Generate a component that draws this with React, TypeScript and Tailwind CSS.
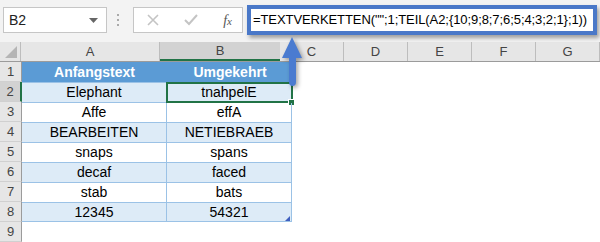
import React from 'react';

const rows = [
  ['Elephant', 'tnahpelE'],
  ['Affe', 'effA'],
  ['BEARBEITEN', 'NETIEBRAEB'],
  ['snaps', 'spans'],
  ['decaf', 'faced'],
  ['stab', 'bats'],
  ['12345', '54321'],
];

const font = { fontFamily: '"Liberation Sans", Arial, sans-serif' };

function RowHead({ n, active }: { n: number; active?: boolean }) {
  return (
    <div
      className={`w-[22px] h-[20px] flex items-center justify-center text-[13px] text-[#444] border-b border-[#d0d0d0] ${
        active ? 'bg-[#d2d2d2] border-r-2 border-r-[#217346]' : 'bg-[#e6e6e6] border-r border-r-[#9b9b9b]'
      }`}
    >
      {n}
    </div>
  );
}

export default function App() {
  return (
    <div className="relative w-[600px] h-[242px] overflow-hidden bg-white" style={font}>
      {/* formula toolbar */}
      <div className="h-[42px] bg-[#f3f3f3] flex items-start pt-[5px]">
        <div className="ml-[3px] mt-[2px] w-[104px] h-[26px] bg-white border border-[#c6c6c6] flex items-center justify-between pl-[5px] pr-[8px]">
          <span className="text-[14px] text-[#222]">B2</span>
          <svg width="9" height="5" viewBox="0 0 9 5">
            <path d="M0 0 L9 0 L4.5 5 Z" fill="#666" />
          </svg>
        </div>
        <div className="ml-[10px] mt-[9px] flex flex-col gap-[3px]">
          <span className="w-[2px] h-[2px] bg-[#aaa]" />
          <span className="w-[2px] h-[2px] bg-[#aaa]" />
          <span className="w-[2px] h-[2px] bg-[#aaa]" />
        </div>
        <div className="ml-[14px] mt-[2px] w-[110px] h-[26px] bg-white border border-[#c6c6c6] flex items-center justify-between pl-[13px] pr-[10px]">
          <svg width="12" height="12" viewBox="0 0 12 12">
            <path d="M1 1 L11 11 M11 1 L1 11" stroke="#c4c4c4" strokeWidth="1.6" />
          </svg>
          <svg width="14" height="12" viewBox="0 0 14 12">
            <path d="M1 6 L5 10 L13 1" stroke="#c4c4c4" strokeWidth="2" fill="none" />
          </svg>
          <span className="text-[14px] italic text-[#555]" style={{ fontFamily: '"Liberation Serif", serif' }}>
            f<span className="text-[11px]">x</span>
          </span>
        </div>
        <div className="ml-[4px] w-[350px] h-[30px] bg-white border-4 border-[#4a78c8] shadow-[2px_3px_4px_rgba(0,0,0,0.35)] flex items-center pl-[2px] overflow-hidden">
          <span className="text-[13px] text-black whitespace-nowrap tracking-[-0.08px]">
            =TEXTVERKETTEN("";1;TEIL(A2;{'{'}10;9;8;7;6;5;4;3;2;1{'}'};1))
          </span>
        </div>
      </div>

      {/* column headers */}
      <div className="flex h-[20px] bg-[#e6e6e6] border-b border-[#9b9b9b] text-[13px] text-[#444]">
        <div className="w-[22px] relative border-r border-[#bdbdbd]">
          <svg className="absolute right-[3px] bottom-[3px]" width="12" height="12" viewBox="0 0 12 12">
            <path d="M12 0 L12 12 L0 12 Z" fill="#b5b5b5" />
          </svg>
        </div>
        <div className="w-[145px] flex items-center justify-center border-r border-[#bdbdbd]">A</div>
        <div className="w-[125px] flex items-center justify-center bg-[#d2d2d2] border-b-2 border-[#217346]">B</div>
        {['C', 'D', 'E', 'F', 'G'].map((c) => (
          <div key={c} className="w-[64px] shrink-0 flex items-center justify-center border-r border-[#bdbdbd]">
            {c}
          </div>
        ))}
      </div>

      {/* grid */}
      <div className="flex text-[14px] text-black">
        <div className="flex flex-col">
          {Array.from({ length: 9 }, (_, i) => (
            <RowHead key={i} n={i + 1} active={i === 1} />
          ))}
        </div>
        <div className="flex flex-col w-[270px]">
          <div className="flex h-[20px] bg-[#5b9bd5] text-white font-bold">
            <div className="w-[145px] flex items-center justify-center">Anfangstext</div>
            <div className="w-[125px] flex items-center justify-center border-l border-[#5b9bd5]">Umgekehrt</div>
          </div>
          {rows.map(([a, b], i) => (
            <div
              key={a}
              className={`flex h-[20px] border-t border-[#9bc2e6] ${i % 2 === 0 ? 'bg-[#ddebf7]' : 'bg-white'} ${
                i === rows.length - 1 ? 'border-b' : ''
              }`}
            >
              <div className="w-[145px] flex items-center justify-center border-r border-[#9bc2e6]">{a}</div>
              <div
                className={`relative w-[125px] flex items-center justify-center border-r border-[#9bc2e6] ${
                  i === 0 ? 'outline-2 outline-[#217346] -outline-offset-1' : ''
                }`}
              >
                {b}
                {i === 0 && (
                  <span className="absolute right-[-4px] bottom-[-4px] w-[7px] h-[7px] bg-[#217346] border border-white" />
                )}
                {i === rows.length - 1 && (
                  <svg className="absolute right-[1px] bottom-[0px]" width="5" height="5" viewBox="0 0 5 5">
                    <path d="M5 0 L5 5 L0 5 Z" fill="#3f5fbf" />
                  </svg>
                )}
              </div>
            </div>
          ))}
        </div>
      </div>

      {/* arrow pointing to the formula */}
      <svg
        className="absolute left-[278px] top-[34px]"
        width="30"
        height="58"
        viewBox="0 0 30 58"
        style={{ filter: 'drop-shadow(2px 2px 2px rgba(0,0,0,0.35))' }}
      >
        <path
          d="M14 3 L24 24 L18 24 L18 48 Q18 52 14.5 52 Q11 52 11 48 L11 24 L4 24 Z"
          fill="#4a7bd0"
        />
      </svg>
    </div>
  );
}
